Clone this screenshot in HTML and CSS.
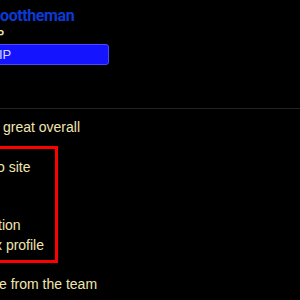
FILE: index.html
```html
<!DOCTYPE html>
<html>
<head>
<meta charset="utf-8">
<link rel="stylesheet" href="styles.css">
</head>
<body>
<div class="page">
  <header class="profile">
    <div class="name">oottheman</div>
    <div class="rank">P</div>
    <div class="badge"><span class="badge-text">IP</span></div>
  </header>
  <hr class="divider">
  <div class="review">
    <p class="line line-great">great overall</p>
    <div class="highlight">
      <p class="line line-site">o site</p>
      <p class="line line-empty">&nbsp;</p>
      <p class="line line-empty">&nbsp;</p>
      <p class="line line-tion">tion</p>
      <p class="line line-profile">x profile</p>
    </div>
    <p class="line line-team">e from the team</p>
  </div>
</div>
</body>
</html>
```
FILE: styles.css
```css
html, body {
  margin: 0;
  padding: 0;
  background: #000;
}
body {
  font-family: "Liberation Sans", Arial, sans-serif;
  color: #f2e6b0;
  overflow: hidden;
}
.page {
  width: 300px;
  height: 300px;
  overflow: hidden;
}
.profile {
  display: flex;
  flex-direction: column;
  align-items: flex-start;
  padding-top: 7px;
}
.name {
  font-family: Roboto, "Liberation Sans", Arial, sans-serif;
  font-size: 16px;
  line-height: 18px;
  font-weight: 700;
  color: #0b3ad6;
  letter-spacing: -0.4px;
}
.rank {
  margin-top: 2px;
  font-size: 10.5px;
  line-height: 14px;
  font-weight: bold;
  color: #f2e6b0;
  margin-left: -3px;
}
.badge {
  margin-top: 3px;
  margin-left: -10px;
  width: 119px;
  height: 21px;
  box-sizing: border-box;
  background: #1414ff;
  border: 1px solid #4a4aff;
  border-radius: 3px;
  padding-top: 2px;
}
.badge-text {
  display: block;
  padding-left: 8px;
  font-size: 13px;
  line-height: 16px;
  color: #d8d8ff;
}
.divider {
  margin: 43px 0 0 0;
  border: 0;
  height: 1px;
  background: #242424;
}
.review {
  display: flex;
  flex-direction: column;
  align-items: flex-start;
}
.line {
  margin: 0;
  font-size: 14px;
  line-height: 19.5px;
  white-space: nowrap;
}
.line-great {
  margin-top: 9px;
  padding-left: 3px;
}
.highlight {
  margin-top: 8px;
  margin-left: -10px;
  width: 68px;
  box-sizing: border-box;
  border: 3px solid #ff0000;
  padding: 9px 0 5px 7px;
}
.line-site { margin-left: -3px; }
.line-tion { margin-left: -2px; }
.line-profile { margin-left: -5px; }
.line-team {
  margin-top: 12px;
  margin-left: -1px;
}
```
